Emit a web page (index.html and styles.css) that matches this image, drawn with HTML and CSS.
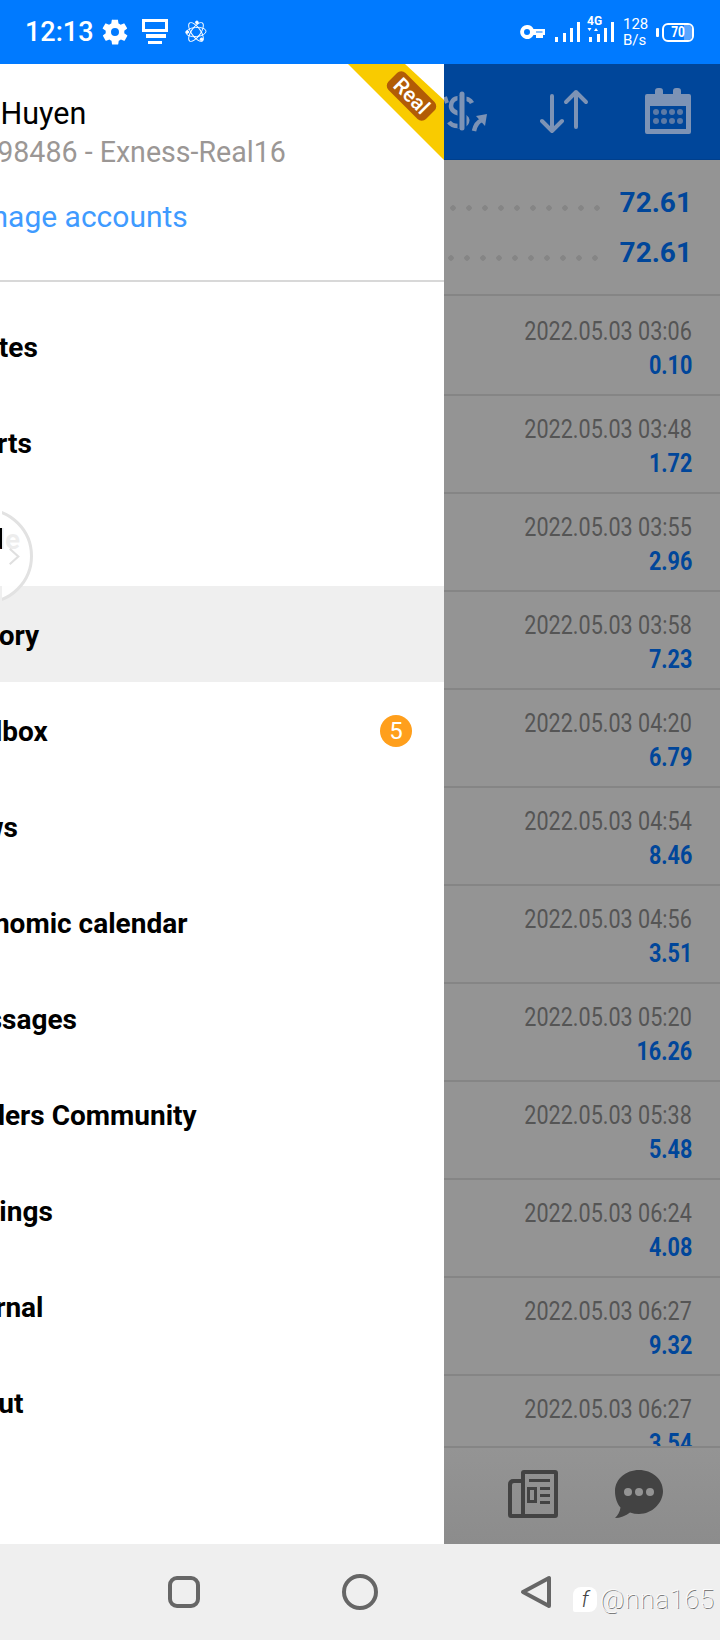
FILE: index.html
```html
<!DOCTYPE html>
<html lang="en">
<head>
<meta charset="utf-8">
<title>MetaTrader history</title>
<link rel="stylesheet" href="styles.css">
</head>
<body>
<div class="statusbar">
  <div class="status-left">
    <span class="clock">12:13</span>
    <svg class="i-gear" viewBox="0 0 24 24"><path fill="#fff" d="M19.4 13a7.500 7.500 0 0 0 0-2l2.100-1.600a.5.5 0 0 0 .1-.6l-2-3.500a.5.5 0 0 0-.6-.2l-2.500 1a7.300 7.300 0 0 0-1.700-1l-.4-2.600a.5.500 0 0 0-.5-.4h-4a.5.500 0 0 0-.5.400l-.4 2.600a7.300 7.300 0 0 0-1.700 1l-2.500-1a.5.5 0 0 0-.6.2l-2 3.500a.5.5 0 0 0 .1.600L4.600 11a7.500 7.500 0 0 0 0 2l-2.100 1.600a.5.5 0 0 0-.1.600l2 3.500a.5.5 0 0 0 .6.200l2.500-1a7.300 7.300 0 0 0 1.700 1l.4 2.600a.5.500 0 0 0 .5.400h4a.5.500 0 0 0 .5-.400l.4-2.600a7.300 7.300 0 0 0 1.700-1l2.500 1a.5.5 0 0 0 .6-.200l2-3.500a.5.500 0 0 0-.1-.600zM12 15.200a3.200 3.200 0 1 1 0-6.400 3.200 3.200 0 0 1 0 6.400z"/></svg>
    <svg class="i-screen" viewBox="0 0 26 26"><path fill="#fff" fill-rule="evenodd" d="M0 0h26v13H0zm3 3v7h20V3zM4 15h20v4H4zM6 22h14v3H6z"/></svg>
    <svg class="i-atom" viewBox="0 0 24 26" fill="none" stroke="#fff" stroke-width="1"><ellipse cx="12" cy="13" rx="5" ry="12" transform="rotate(-35 12 13)"/><ellipse cx="12" cy="13" rx="5" ry="12" transform="rotate(35 12 13)"/><ellipse cx="12" cy="13" rx="5" ry="11" transform="rotate(85 12 13)"/><circle cx="13" cy="2.500" r="1.500" fill="#fff"/><circle cx="2.500" cy="13" r="1.500" fill="#fff"/><circle cx="18" cy="21" r="1.500" fill="#fff"/></svg>
  </div>
  <div class="status-right">
    <svg class="i-key" viewBox="0 0 25 14"><path fill="#fff" fill-rule="evenodd" d="M7 0a7 7 0 0 1 6.500 4H25v6h-2v3h-7v-3h-2.500A7 7 0 1 1 7 0zm0 4a3 3 0 1 0 0 6 3 3 0 0 0 0-6zm9 2.500v1h6.500v-1z"/></svg>
    <svg class="i-sig" viewBox="0 0 25 20"><path fill="#fff" d="M0 15h3v5H0zM8 11h3v9H8zM15 6h3v14h-3zM22 0h3v20h-3z"/></svg>
    <div class="sig2">
      <span class="lte">4G</span>
      <svg class="i-sig2" viewBox="0 0 27 25"><path fill="#fff" d="M.5 11h4l-2 3zM7 14l2-3 2 3zM2 20h3v5H2zM10 17h3v8h-3zM17 11h3v14h-3zM24 5h3v20h-3z"/></svg>
    </div>
    <div class="speed"><span>128</span><span>B/s</span></div>
    <div class="battery"><span class="batt-tip"></span><span class="batt-body"><span class="batt-fill"></span><span class="batt-num">70</span></span></div>
  </div>
</div>

<div class="screen">
  <aside class="drawer">
    <div class="ribbon"><span class="ribbon-tag">Real</span></div>
    <header class="account">
      <div class="acc-name">Nguyen Huyen</div>
      <div class="acc-server">76498486 - Exness-Real16</div>
      <div class="acc-manage">Manage accounts</div>
    </header>
    <nav class="menu">
      <div class="menu-item"><span class="menu-label">Quotes</span></div>
      <div class="menu-item"><span class="menu-label">Charts</span></div>
      <div class="menu-item"><span class="menu-label">Trade</span></div>
      <div class="menu-item active"><span class="menu-label">History</span></div>
      <div class="menu-item"><span class="menu-label">Mailbox</span><span class="badge">5</span></div>
      <div class="menu-item"><span class="menu-label">News</span></div>
      <div class="menu-item"><span class="menu-label">Economic calendar</span></div>
      <div class="menu-item"><span class="menu-label">Messages</span></div>
      <div class="menu-item"><span class="menu-label">Traders Community</span></div>
      <div class="menu-item"><span class="menu-label">Settings</span></div>
      <div class="menu-item"><span class="menu-label">Journal</span></div>
      <div class="menu-item"><span class="menu-label">About</span></div>
    </nav>
    <div class="floater"><svg viewBox="0 0 14 22" fill="none" stroke="#e0e0e0" stroke-width="2.500"><path d="M2 2l10 9-10 9"/></svg></div>
  </aside>

  <main class="content">
    <div class="toolbar">
      <svg class="i-dollar" viewBox="0 0 46 46"><g fill="none" stroke-linecap="butt"><path stroke="#7d93b5" stroke-width="4" d="M1 9l2 6"/><path stroke="#7d93b5" stroke-width="4.500" d="M28 15C26 11 21 10 16 10 9 10 7 14 7 18c0 6 7 7 11 9 5 2 6 5 5 7-1 3-6 4-9 4-4 0-7-1-9-4"/><path stroke="#00469a" stroke-width="9" d="M18 8v32"/><path stroke="#7d93b5" stroke-width="5" stroke-linecap="round" d="M18 6v34"/><path stroke="#7d93b5" stroke-width="4.500" d="M30 43c1-5 3-9 8-11"/></g><path fill="#7d93b5" d="M32 28l11-2-2 12z"/></svg>
      <svg class="i-updown" viewBox="0 0 50 46" fill="none" stroke="#7d93b5" stroke-width="4" stroke-linecap="round" stroke-linejoin="round"><path d="M12 7v35M2 32l10 10 10-10"/><path d="M36 38V3M26 13L36 3l10 10"/></svg>
      <svg class="i-cal" viewBox="0 0 46 48"><path fill="#7d93b5" fill-rule="evenodd" d="M2 7h8V4a3 3 0 0 1 3-3h2a3 3 0 0 1 3 3v3h10V4a3 3 0 0 1 3-3h2a3 3 0 0 1 3 3v3h8a2 2 0 0 1 2 2v36a2 2 0 0 1-2 2H2a2 2 0 0 1-2-2V9a2 2 0 0 1 2-2zm3 12v23h36V19z"/><g fill="#5c7aa6"><circle cx="11" cy="25" r="3"/><circle cx="19" cy="25" r="3"/><circle cx="27" cy="25" r="3"/><circle cx="35" cy="25" r="3"/><circle cx="11" cy="34" r="3"/><circle cx="19" cy="34" r="3"/><circle cx="27" cy="34" r="3"/><circle cx="35" cy="34" r="3"/></g></svg>
    </div>
    <div class="summary">
      <div class="sum-row"><span class="dots"></span><span class="sum-val">72.61</span></div>
      <div class="sum-row"><span class="dots"></span><span class="sum-val">72.61</span></div>
    </div>
    <div class="deals">
      <div class="deal"><span class="d-date">2022.05.03 03:06</span><span class="d-val">0.10</span></div>
      <div class="deal"><span class="d-date">2022.05.03 03:48</span><span class="d-val">1.72</span></div>
      <div class="deal"><span class="d-date">2022.05.03 03:55</span><span class="d-val">2.96</span></div>
      <div class="deal"><span class="d-date">2022.05.03 03:58</span><span class="d-val">7.23</span></div>
      <div class="deal"><span class="d-date">2022.05.03 04:20</span><span class="d-val">6.79</span></div>
      <div class="deal"><span class="d-date">2022.05.03 04:54</span><span class="d-val">8.46</span></div>
      <div class="deal"><span class="d-date">2022.05.03 04:56</span><span class="d-val">3.51</span></div>
      <div class="deal"><span class="d-date">2022.05.03 05:20</span><span class="d-val">16.26</span></div>
      <div class="deal"><span class="d-date">2022.05.03 05:38</span><span class="d-val">5.48</span></div>
      <div class="deal"><span class="d-date">2022.05.03 06:24</span><span class="d-val">4.08</span></div>
      <div class="deal"><span class="d-date">2022.05.03 06:27</span><span class="d-val">9.32</span></div>
      <div class="deal"><span class="d-date">2022.05.03 06:27</span><span class="d-val">3.54</span></div>
    </div>
    <div class="bottombar">
      <svg class="i-news" viewBox="0 0 50 48"><path fill="#434343" fill-rule="evenodd" d="M16 0h31a3 3 0 0 1 3 3v42a3 3 0 0 1-3 3H3a3 3 0 0 1-3-3V14a5 5 0 0 1 5-5h8V3a3 3 0 0 1 3-3zm1 4v40h29V4zM4 15v29h9V13H6a2 2 0 0 0-2 2z"/><path fill="#434343" fill-rule="evenodd" d="M21 9h21v3H21zM19 17h10v16H19zM22 20v10h4V20zM32 17h10v3H32zM32 24h10v3H32zM32 31h10v3H32z"/></svg>
      <svg class="i-chat" viewBox="0 0 48 48"><path fill="#434343" d="M24 0c13 0 24 9 24 21S37 44 24 44c-3 0-6-.5-9-1.500C11 46 5 48 0 48c3-3 5-6 5.500-10.500C2 33.500 0 27.500 0 21 0 9 11 0 24 0z"/><g fill="#949494"><circle cx="13" cy="22" r="4"/><circle cx="24" cy="22" r="4"/><circle cx="35" cy="22" r="4"/></g></svg>
    </div>
  </main>
</div>

<footer class="navbar">
  <span class="nav-square"></span>
  <span class="nav-circle"></span>
  <svg class="nav-back" viewBox="0 0 32 34" fill="none" stroke="#666" stroke-width="4" stroke-linejoin="round"><path d="M29 3v28L3 17z"/></svg>
  <div class="watermark"><span class="wm-logo">f</span><span class="wm-text">@nna165</span></div>
</footer>
</body>
</html>
```
FILE: styles.css
```css
* { box-sizing: border-box; }
html, body { margin: 0; padding: 0; }
body { width: 720px; height: 1640px; overflow: hidden; font-family: Roboto, "Noto Sans", sans-serif; background: #efefef; }

.statusbar { height: 64px; background: #007aff; display: flex; justify-content: space-between; align-items: center; color: #fff; }
.status-left { display: flex; align-items: center; padding-left: 25px; }
.clock { font-size: 27px; font-weight: 500; line-height: 30px; width: 75px; }
.i-gear { width: 30px; height: 30px; }
.i-screen { width: 26px; height: 26px; margin-left: 12px; }
.i-atom { width: 22px; height: 26px; margin-left: 17px; }
.status-right { display: flex; align-items: center; padding-right: 26px; }
.i-key { width: 25px; height: 14px; }
.i-sig { width: 25px; height: 20px; margin-left: 10px; }
.sig2 { position: relative; width: 27px; height: 30px; margin-left: 7px; }
.i-sig2 { position: absolute; left: 0; top: 0; width: 27px; height: 25px; }
.lte { position: absolute; left: 0; top: -1px; font-size: 12px; font-weight: 700; line-height: 10px; }
.speed { display: flex; flex-direction: column; font-size: 15px; line-height: 16px; margin-left: 9px; width: 25px; }
.battery { display: flex; align-items: center; margin-left: 8px; }
.batt-tip { width: 3px; height: 9px; background: #fff; margin-right: 3px; border-radius: 1px; }
.batt-body { position: relative; width: 32px; height: 19px; border: 2px solid #fff; border-radius: 6px; display: flex; align-items: center; justify-content: center; overflow: hidden; }
.batt-fill { position: absolute; right: 0; top: 0; bottom: 0; width: 8px; background: #5aa5ff; }
.batt-num { position: relative; font-size: 14px; font-weight: 700; line-height: 14px; transform: scaleX(.85); }

.screen { height: 1480px; display: flex; position: relative; }
.drawer { width: 444px; flex: none; background: #fff; position: relative; overflow: hidden; }
.ribbon { position: absolute; top: 0; right: 0; width: 96px; height: 96px; background: #f9cb00; clip-path: polygon(0 0, 57px 0, 100% 36px, 100% 100%); }
.ribbon-tag { position: absolute; left: 37px; top: 20px; width: 53px; height: 24px; font-size: 21px; font-weight: 500; line-height: 24px; text-align: center; color: #fff; background: #b25c06; border-radius: 6px; transform: rotate(45deg); }
.account { height: 218px; border-bottom: 2px solid #d8d8d8; margin-bottom: 16px; }
.acc-name, .acc-server, .acc-manage { white-space: nowrap; }
.acc-name { font-size: 30.500px; line-height: 32px; margin-left: -110px; padding-top: 34px; box-sizing: content-box; color: #000; }
.acc-server { font-size: 28.600px; line-height: 32px; margin-left: -51px; margin-top: 6px; color: #9b9795; }
.acc-manage { font-size: 30px; line-height: 34px; margin-left: -51px; margin-top: 32px; color: #3f9bff; }
.menu { display: flex; flex-direction: column; }
.menu-item { height: 96px; display: flex; align-items: center; justify-content: space-between; padding: 2px 32px 0 0; font-size: 28px; font-weight: 700; color: #000; white-space: nowrap; }
.menu-label { margin-left: -52px; }
.menu-item.active { background: #efefef; }
.badge { width: 32px; height: 32px; border-radius: 50%; background: #ff9f1c; color: #fff; font-size: 24px; font-weight: 400; display: flex; align-items: center; justify-content: center; }
.floater { position: absolute; left: -63px; top: 444px; width: 96px; height: 96px; border-radius: 50%; background: rgba(255,255,255,.93); border: 3px solid #e2e2e2; display: flex; align-items: center; justify-content: flex-end; padding-right: 10px; clip-path: inset(0 0 0 65px); }
.floater svg { width: 12px; height: 19px; }

.content { flex: 1; background: #949494; display: flex; flex-direction: column; min-width: 0; }
.toolbar { height: 96px; flex: none; background: #00469a; border-bottom: 1px solid #003f8c; position: relative; }
.i-dollar { position: absolute; left: 0; top: 24px; width: 46px; height: 46px; }
.i-updown { position: absolute; left: 96px; top: 25px; width: 50px; height: 46px; }
.i-cal { position: absolute; left: 201px; top: 23px; width: 46px; height: 48px; }
.summary { height: 136px; flex: none; padding-top: 17px; border-bottom: 2px solid #858585; }
.sum-row { height: 50px; display: flex; align-items: center; justify-content: flex-end; padding-right: 28px; }
.dots { width: 150px; height: 6px; margin: 12px 20px 0 0; background: radial-gradient(circle at 3px 3px, #858585 2.500px, transparent 3px) 0 0 / 16px 6px repeat-x; }
.sum-row + .sum-row .dots { margin-right: 22px; }
.sum-val { font-size: 28px; font-weight: 700; color: #00469a; }
.deals { flex: 1; min-height: 0; overflow: hidden; padding-top: 2px; }
.deal { height: 98px; border-bottom: 2px solid #858585; display: flex; flex-direction: column; align-items: flex-end; padding: 18px 28px 0 0; white-space: nowrap; }
.d-date { font-size: 26px; line-height: 30px; color: #555; transform: scaleX(.83); transform-origin: right center; }
.d-val { font-size: 26px; font-weight: 700; line-height: 30px; margin-top: 4px; color: #00469a; transform: scaleX(.83); transform-origin: right center; }
.bottombar { height: 98px; flex: none; border-top: 2px solid #858585; position: relative; background: linear-gradient(#949494, #8c8c8c); }
.i-news { position: absolute; left: 64px; top: 22px; width: 50px; height: 48px; }
.i-chat { position: absolute; left: 171px; top: 22px; width: 48px; height: 48px; }

.navbar { height: 96px; background: #efefef; position: relative; display: flex; align-items: center; }
.nav-square { width: 32px; height: 32px; border: 4px solid #666; border-radius: 9px; margin-left: 168px; }
.nav-circle { width: 36px; height: 36px; border: 4px solid #666; border-radius: 50%; margin-left: 142px; }
.nav-back { width: 32px; height: 34px; margin-left: 142px; }
.watermark { position: absolute; left: 573px; top: 40px; display: flex; align-items: center; color: #fff; text-shadow: 1px 1px 0 #666; }
.wm-logo { width: 24px; height: 25px; background: #fff; border-radius: 8px 8px 8px 2px; color: #444; text-shadow: none; font-size: 22px; font-weight: 300; font-style: italic; display: flex; align-items: center; justify-content: center; }
.wm-text { font-size: 26px; font-weight: 100; margin-left: 3px; letter-spacing: .8px; }
```
